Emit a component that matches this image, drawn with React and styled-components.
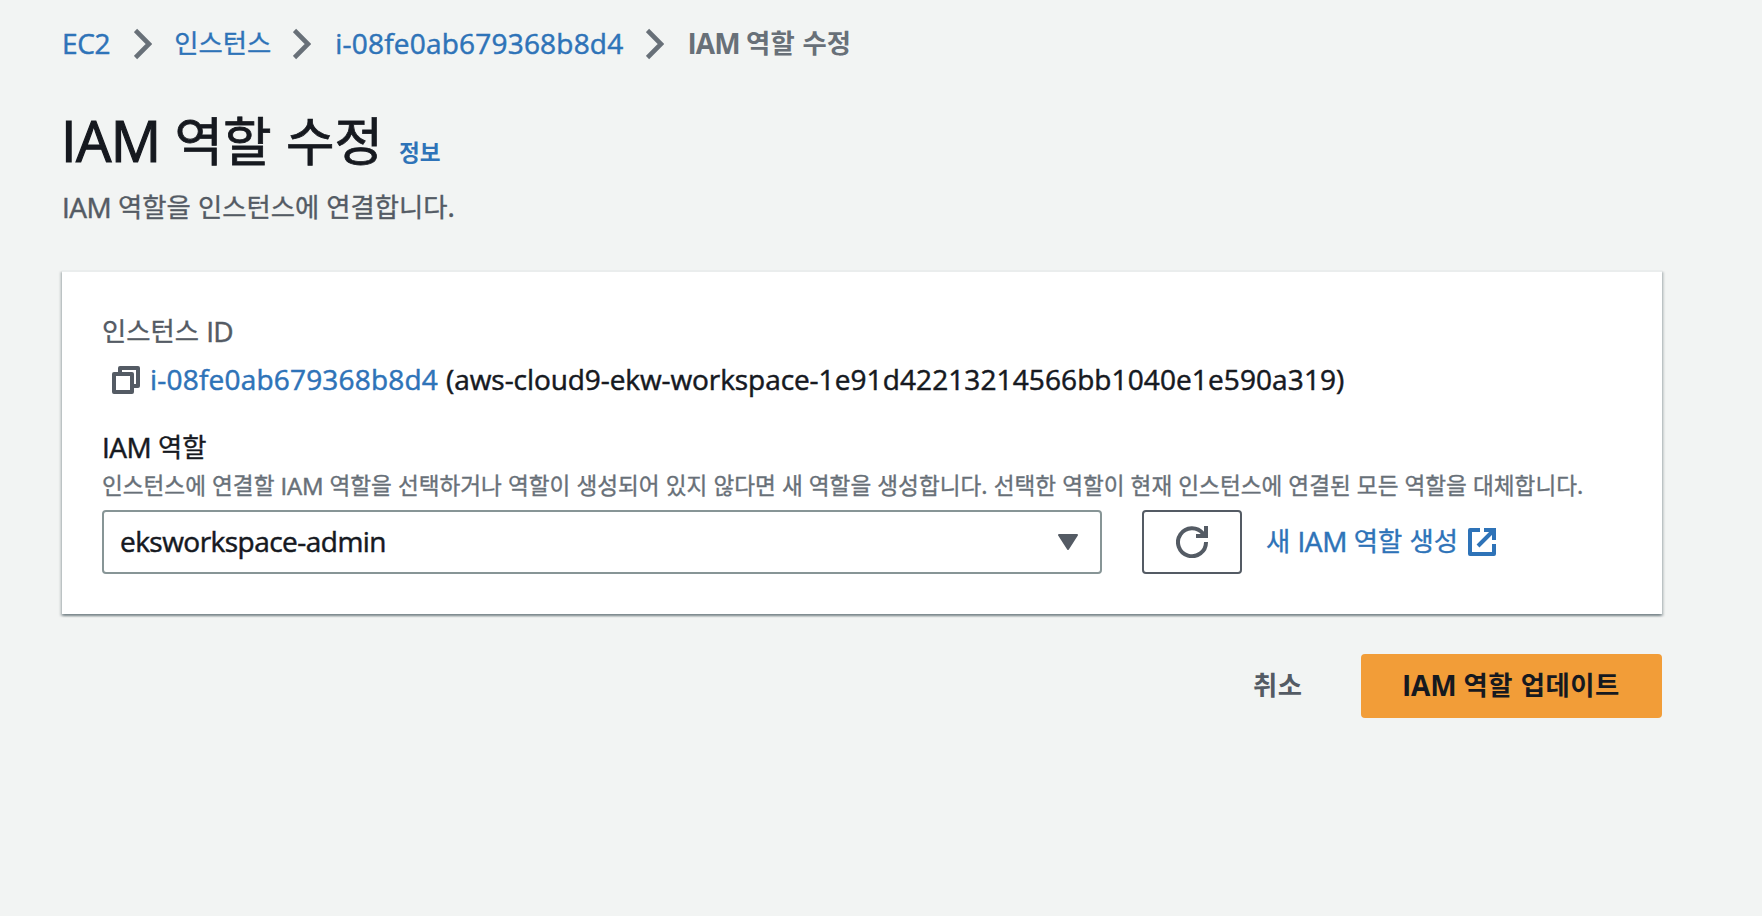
import React from "react";
import styled, { createGlobalStyle, css } from "styled-components";

const color = {
  page: "#f2f4f3",
  ink: "#16191f",
  body: "#545b64",
  muted: "#687078",
  link: "#2e73b8",
  field: "#879596",
  primary: "#f29d38",
};

const GlobalStyle = createGlobalStyle`
  * { box-sizing: border-box; }
  body {
    margin: 0;
    background: ${color.page};
    color: ${color.ink};
    font: 400 28px/44px "Open Sans", "Noto Sans CJK KR", sans-serif;
    white-space: nowrap;
  }
`;

const Page = styled.main`
  width: 1762px;
  height: 916px;
  padding: 21px 100px 0 62px;
  overflow: hidden;
`;

/* Latin and Hangul runs carry their own size and tracking on a shared line. */
const En = styled.span`
  line-height: 0;
  letter-spacing: ${(p) => p.$track || 0}px;
  -webkit-text-stroke: ${(p) => (p.$bold ? 0 : p.$stroke || 0.5)}px currentColor;
`;

const Ko = styled.span`
  font-family: "Noto Sans CJK KR", sans-serif;
  font-size: 0.942em;
  line-height: 0;
  vertical-align: 1px;
  letter-spacing: ${(p) => p.$track || 0}px;
  word-spacing: 0.047em;
  -webkit-text-stroke: ${(p) => (p.$bold ? 0 : p.$stroke || 0.35)}px currentColor;
`;

const linkStyle = css`
  color: ${color.link};
  text-decoration: none;
`;

const Link = styled.a`
  ${linkStyle}
`;

const Crumbs = styled.nav`
  display: flex;
  height: 44px;
`;

const CurrentCrumb = styled.span`
  color: ${color.muted};
  font-weight: 700;
`;

const ChevronIcon = styled.svg`
  width: 18px;
  height: 32px;
  margin: 7px ${(p) => p.$after}px 0 ${(p) => p.$before}px;
  fill: none;
  stroke: ${color.muted};
  stroke-width: 4.6;
`;

const TitleRow = styled.header`
  display: flex;
  align-items: baseline;
  height: 80px;
  margin-top: 35px;
`;

const Title = styled.h1`
  margin: 0 0 0 -1px;
  font-size: 56px;
  font-weight: 400;
  line-height: 80px;
`;

const InfoLink = styled.a`
  ${linkStyle}
  margin-left: 16px;
  font-size: 24px;
  font-weight: 700;
`;

const Description = styled.p`
  height: 44px;
  margin: 5px 0 41px;
  color: ${color.body};
`;

const Card = styled.section`
  height: 344px;
  padding: 37px 40px 0;
  border-top: 2px solid #eaeded;
  background: #fff;
  box-shadow: 0 2px 2px 0 rgba(0, 28, 36, 0.3), 2px 2px 2px 0 rgba(0, 28, 36, 0.15),
    -2px 2px 2px 0 rgba(0, 28, 36, 0.15);
`;

const Label = styled.div`
  height: 44px;
  color: ${(p) => (p.$dim ? color.body : color.ink)};
`;

const InstanceRow = styled.div`
  display: flex;
  height: 44px;
  margin: 4px 0 24px;
`;

const CopyIcon = styled.svg`
  width: 28px;
  height: 28px;
  margin: 9px 10px 0;
  fill: none;
  stroke: ${color.body};
  stroke-width: 4;
  stroke-linejoin: round;
`;

const InstanceName = styled.span`
  margin-left: 8px;
`;

const Hint = styled.div`
  height: 36px;
  margin: -1px 0 6px;
  color: ${color.muted};
  font-size: 24px;
  line-height: 36px;
`;

const Controls = styled.div`
  display: flex;
`;

const Select = styled.div`
  display: flex;
  justify-content: space-between;
  width: 1000px;
  height: 64px;
  padding: 7px 22px 0 16px;
  border: 2px solid ${color.field};
  border-radius: 4px;
`;

const SelectValue = styled.span`
  height: 44px;
`;

const CaretIcon = styled.svg`
  width: 20px;
  height: 16px;
  margin-top: 15px;
  fill: ${color.body};
  stroke: ${color.body};
  stroke-width: 2;
  stroke-linejoin: round;
`;

const RefreshButton = styled.button`
  display: flex;
  align-items: center;
  justify-content: center;
  width: 100px;
  height: 64px;
  margin: 0 24px 0 40px;
  padding: 0;
  border: 2px solid ${color.body};
  border-radius: 4px;
  background: #fff;
`;

const RefreshIcon = styled.svg`
  width: 32px;
  height: 32px;
  fill: none;
  stroke: ${color.body};
  stroke-width: 4;
`;

const CreateLink = styled.a`
  ${linkStyle}
  display: flex;
  padding-top: 9px;
`;

const ExternalIcon = styled.svg`
  width: 28px;
  height: 28px;
  margin: 9px 0 0 10px;
  fill: none;
  stroke: ${color.link};
  stroke-width: 4;
`;

const Actions = styled.footer`
  display: flex;
  justify-content: flex-end;
  margin-top: 40px;
`;

const Button = styled.button`
  height: 64px;
  padding: 0 0 2px ${(p) => p.$inset}px;
  width: ${(p) => p.$width}px;
  border: 0;
  border-radius: 4px;
  background: ${(p) => (p.$primary ? color.primary : "transparent")};
  color: ${(p) => (p.$primary ? color.ink : color.body)};
  font: inherit;
  font-weight: 700;
  line-height: 60px;
  text-align: left;
`;

const Chevron = ({ before, after }) => (
  <ChevronIcon $before={before} $after={after} viewBox="0 0 18 32">
    <path d="M1.500 2.500 15 16 1.500 29.500" />
  </ChevronIcon>
);

export default function App() {
  return (
    <>
      <GlobalStyle />
      <Page>
        <Crumbs>
          <Link><En $track={-0.3}>EC2</En></Link>
          <Chevron before={24} after={22} />
          <Link><Ko>인스턴스</Ko></Link>
          <Chevron before={22} after={24} />
          <Link><En $track={0.2}>i-08fe0ab679368b8d4</En></Link>
          <Chevron before={23} after={23} />
          <CurrentCrumb><En $bold $track={-0.9}>IAM </En><Ko $bold $track={0.2}>역할 수정</Ko></CurrentCrumb>
        </Crumbs>

        <TitleRow>
          <Title><En $track={-0.6} $stroke={1.2}>IAM </En><Ko $stroke={0.8}>역할 수정</Ko></Title>
          <InfoLink><Ko $bold>정보</Ko></InfoLink>
        </TitleRow>
        <Description><En $track={-0.5}>IAM </En><Ko>역할을 인스턴스에 연결합니다.</Ko></Description>

        <Card>
          <Label $dim><Ko>인스턴스 </Ko><En $track={-0.7}>ID</En></Label>
          <InstanceRow>
            <CopyIcon viewBox="0 0 28 28">
              <path d="M8 8V2h18v18h-6M2 8h18v18H2z" />
            </CopyIcon>
            <Link><En $track={0.2}>i-08fe0ab679368b8d4</En></Link>
            <InstanceName>
              <En $track={-0.08}>(aws-cloud9-ekw-workspace-</En>
              <En $track={0.1}>1e91d42213214566bb1040e1e590a319)</En>
            </InstanceName>
          </InstanceRow>
          <Label><En $track={-0.5}>IAM </En><Ko>역할</Ko></Label>
          <Hint>
            <Ko>인스턴스에 연결할 </Ko><En $track={-0.2}>IAM </En>
            <Ko>역할을 선택하거나 역할이 생성되어 있지 않다면 새 역할을 생성합니다. 선택한 역할이 현재 인스턴스에 연결된 모든 역할을 대체합니다.</Ko>
          </Hint>
          <Controls>
            <Select>
              <SelectValue><En $track={-0.53}>eksworkspace-admin</En></SelectValue>
              <CaretIcon viewBox="0 0 20 16"><path d="M1 1h18l-9 14z" /></CaretIcon>
            </Select>
            <RefreshButton aria-label="새로 고침">
              <RefreshIcon viewBox="0 0 32 32">
                <path d="M30 16A14 14 0 1 1 27 7.500L29.500 10.500" />
                <path d="M20 10H30V0" />
              </RefreshIcon>
            </RefreshButton>
            <CreateLink>
              <span><Ko>새 </Ko><En $track={-0.4}>IAM </En><Ko>역할 생성</Ko></span>
              <ExternalIcon viewBox="0 0 28 28">
                <path strokeLinejoin="round" d="M12 2H2v24h24V16" />
                <path d="M16 2h10v10M26 2 10 18" />
              </ExternalIcon>
            </CreateLink>
          </Controls>
        </Card>

        <Actions>
          <Button $width={110} $inset={2}><Ko $bold $track={0.5}>취소</Ko></Button>
          <Button $primary $width={301} $inset={41}><En $bold $track={-0.2}>IAM </En><Ko $bold $track={0.5}>역할 업데이트</Ko></Button>
        </Actions>
      </Page>
    </>
  );
}
